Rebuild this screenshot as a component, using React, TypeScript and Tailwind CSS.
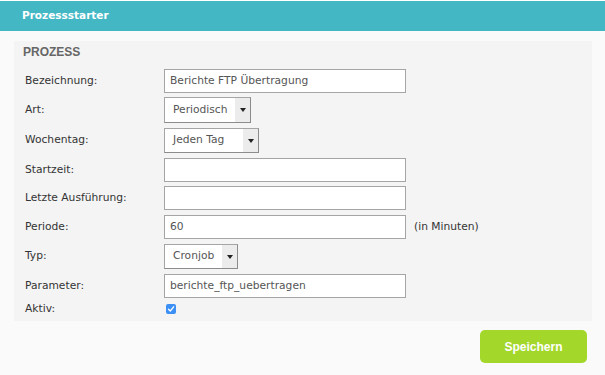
import React from "react";

const font = { fontFamily: '"DejaVu Sans", Verdana, sans-serif' };

function TextInput({ value }: { value?: string }) {
  return (
    <div className="w-[242px] h-[24px] border border-[#a5a5a5] bg-white flex items-center pl-[5px] text-[10.7px] text-[#555]">
      {value}
    </div>
  );
}

function Select({ value, w, h }: { value: string; w: string; h: string }) {
  return (
    <div className={`${w} ${h} flex border border-[#a5a5a5] border-r-[#8c8c8c] border-b-[#8c8c8c] bg-white`}>
      <div className="flex-1 flex items-center pl-[8px] text-[10.7px] text-[#555]">{value}</div>
      <div className="w-[15px] bg-[#ececec] flex items-center justify-center">
        <svg width="6" height="4" viewBox="0 0 6 4">
          <path d="M0 0 H6 L3 4 Z" fill="#222" />
        </svg>
      </div>
    </div>
  );
}

function Row({ label, mt, h, children }: { label: string; mt: string; h: string; children: React.ReactNode }) {
  return (
    <div className={`flex items-center ${mt} ${h}`}>
      <div className="w-[139px] text-[10.7px] text-[#333] pl-[11px] box-content">{label}</div>
      {children}
    </div>
  );
}

export default function App() {
  return (
    <div className="w-[605px] h-[375px] bg-[#fafafa] overflow-hidden" style={font}>
      <div className="h-[1px] bg-white" />
      <div className="h-[30px] bg-[#43b8c4] flex items-center pl-[22px] text-white text-[10.5px] font-bold">
        Prozessstarter
      </div>
      <div className="mt-[10px] ml-[14px] w-[578px] h-[280px] bg-[#f4f4f4] flex flex-col">
        <div
          className="pl-[9px] pt-[4px] h-[28px] leading-[14px] text-[12px] font-bold text-[#666]"
          style={{ fontFamily: '"Liberation Sans", Arial, sans-serif' }}
        >
          PROZESS
        </div>
        <div className="flex flex-col">
          <Row label="Bezeichnung:" mt="mt-0" h="h-[24px]">
            <TextInput value="Berichte FTP Übertragung" />
          </Row>
          <Row label="Art:" mt="mt-[4px]" h="h-[26px]">
            <Select value="Periodisch" w="w-[87px]" h="h-[26px]" />
          </Row>
          <Row label="Wochentag:" mt="mt-[5px]" h="h-[25px]">
            <Select value="Jeden Tag" w="w-[95px]" h="h-[25px]" />
          </Row>
          <Row label="Startzeit:" mt="mt-[5px]" h="h-[24px]">
            <TextInput />
          </Row>
          <Row label="Letzte Ausführung:" mt="mt-[4px]" h="h-[24px]">
            <TextInput />
          </Row>
          <Row label="Periode:" mt="mt-[5px]" h="h-[24px]">
            <TextInput value="60" />
            <span className="ml-[8px] text-[10.7px] text-[#333]">(in Minuten)</span>
          </Row>
          <Row label="Typ:" mt="mt-[5px]" h="h-[25px]">
            <Select value="Cronjob" w="w-[74px]" h="h-[25px]" />
          </Row>
          <Row label="Parameter:" mt="mt-[5px]" h="h-[24px]">
            <TextInput value="berichte_ftp_uebertragen" />
          </Row>
          <Row label="Aktiv:" mt="mt-[3px]" h="h-[16px]">
            <div className="ml-[2px] w-[10px] h-[10px] rounded-[2px] bg-[#3b8ff5] flex items-center justify-center">
              <svg width="8" height="8" viewBox="0 0 8 8">
                <path d="M1.5 4.2 L3.3 6 L6.6 1.8" stroke="white" strokeWidth="1.3" fill="none" strokeLinecap="round" strokeLinejoin="round" />
              </svg>
            </div>
          </Row>
        </div>
      </div>
      <div className="flex justify-end pr-[18px] mt-[9px]">
        <button
          className="w-[107px] h-[33px] rounded-[5px] bg-[#a3d72a] text-white text-[12px] font-bold"
          style={{ fontFamily: '"Liberation Sans", Arial, sans-serif' }}
        >
          Speichern
        </button>
      </div>
    </div>
  );
}
